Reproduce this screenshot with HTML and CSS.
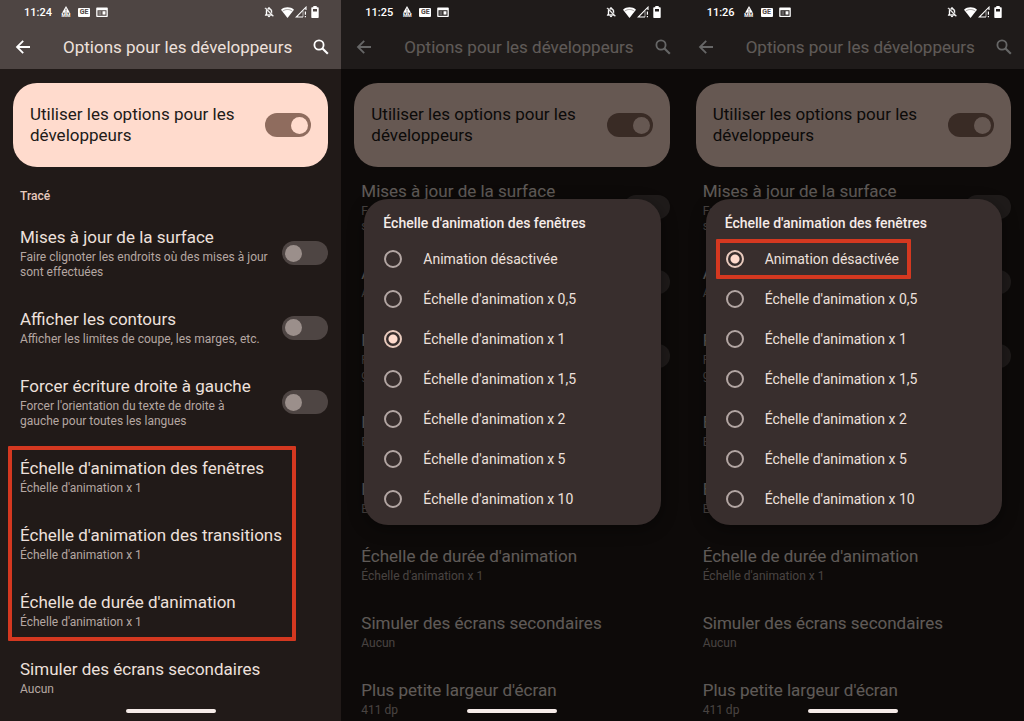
FILE: index.html
```html
<!DOCTYPE html>
<html lang="fr">
<head>
<meta charset="utf-8">
<meta name="viewport" content="width=device-width, initial-scale=1">
<title>Options pour les développeurs</title>
<link rel="stylesheet" href="styles.css">
</head>
<body>
<svg class="sprite" aria-hidden="true">
  <symbol id="i-peak" viewBox="0 0 12 8"><path d="M6 0 10.500 7.800h-9Z" fill="currentColor"/><path d="M6 3v2.200M6 6v1" stroke="#4e4543" stroke-width="1"/></symbol>
  <symbol id="i-card" viewBox="0 0 12 12"><path fill="currentColor" fill-rule="evenodd" d="M1 1.500h10a.8.8 0 0 1 .8.8v8a.8.8 0 0 1-.8.800H1a.8.8 0 0 1-.8-.8v-8a.8.8 0 0 1 .8-.8ZM1.500 4.200v5.600h9V4.200Z"/><path fill="currentColor" d="M6.500 5.200h3v3.400h-3Z"/><path fill="currentColor" d="M2.400 5.600h3v1h-3ZM2.400 7.600h3v1h-3Z" opacity=".6"/></symbol>
  <symbol id="i-bell" viewBox="0 0 24 24"><path fill="currentColor" stroke="currentColor" stroke-width=".8" d="M20 18.690 7.840 6.140 5.270 3.490 4 4.760l2.800 2.800v.010c-.520.990-.800 2.160-.800 3.420v5l-2 2v1h13.730l2 2L21 19.720l-1-1.030ZM12 22c1.110 0 2-.890 2-2h-4c0 1.110.890 2 2 2Zm6-7.320V11c0-3.080-1.640-5.640-4.500-6.320V4c0-.830-.670-1.500-1.500-1.500s-1.500.670-1.500 1.500v.680c-.510.120-.990.310-1.430.550L10.600 6.800c.440-.190.900-.300 1.400-.300 2.490 0 4 2.020 4 4.500v1.100l2 2.580ZM8 17v-6c0-.650.100-1.270.300-1.820L15.900 17H8Z"/></symbol>
  <symbol id="i-wifi" viewBox="0 0 24 20"><path fill="currentColor" d="M12 20 0 5C3.500 2 7.500.500 12 .500S20.500 2 24 5Z"/><path d="M3 7.500C6 5.200 9 4.500 12 4.500s6 .7 9 3" fill="none" stroke="#4e4543" stroke-width="1.300" opacity=".7"/></symbol>
  <symbol id="i-signal" viewBox="0 0 12 12"><path d="M8 11H1.200L11 1.200V4" fill="none" stroke="currentColor" stroke-width="1.100"/><path d="M8 11V5" stroke="currentColor" stroke-width=".6"/><path d="M10.400 5.500v3.300M10.400 10v1.300" stroke="currentColor" stroke-width="1.200"/></symbol>
  <symbol id="i-battery" viewBox="0 0 8 12"><path fill="currentColor" fill-rule="evenodd" d="M2.300 0h3.400v1.300H7a.7.7 0 0 1 .7.700v9.300a.7.7 0 0 1-.7.700H1a.7.7 0 0 1-.7-.7V2a.7.7 0 0 1 .7-.7h1.300ZM2 3v2.500h4V3Z"/></symbol>
  <symbol id="i-back" viewBox="0 0 16 16"><path d="M15 8H2M8.200 1.800 2 8l6.200 6.200" fill="none" stroke="currentColor" stroke-width="1.800"/></symbol>
  <symbol id="i-search" viewBox="0 0 16 16"><circle cx="6" cy="6" r="4.600" fill="none" stroke="currentColor" stroke-width="1.800"/><path d="m9.500 9.500 5.300 5.300" stroke="currentColor" stroke-width="2.100"/></symbol>
</svg>

<main class="screens">
  <section class="phone">
    <header class="top">
      <div class="status">
        <time>11:24</time>
        <span class="ic peak"><svg><use href="#i-peak"/></svg><b>MM</b></span><b class="ic news">GE</b><svg class="ic"><use href="#i-card"/></svg>
        <span class="spacer"></span>
        <svg class="ic"><use href="#i-bell"/></svg><svg class="ic wifi"><use href="#i-wifi"/></svg><svg class="ic signal"><use href="#i-signal"/></svg><svg class="ic battery"><use href="#i-battery"/></svg>
      </div>
      <div class="appbar">
        <button class="iconbtn" aria-label="Retour"><svg><use href="#i-back"/></svg></button>
        <h1>Options pour les développeurs</h1>
        <button class="iconbtn" aria-label="Rechercher"><svg><use href="#i-search"/></svg></button>
      </div>
    </header>
    <label class="master"><span>Utiliser les options pour les développeurs</span><input class="switch" type="checkbox" role="switch" checked></label>
    <h2 class="section">Tracé</h2>
    <div class="list">
      <label class="item"><span class="txt"><span class="name">Mises à jour de la surface</span><span class="sub">Faire clignoter les endroits où des mises à jour sont effectuées</span></span><input class="switch" type="checkbox" role="switch"></label>
      <label class="item"><span class="txt"><span class="name">Afficher les contours</span><span class="sub">Afficher les limites de coupe, les marges, etc.</span></span><input class="switch" type="checkbox" role="switch"></label>
      <label class="item"><span class="txt"><span class="name">Forcer écriture droite à gauche</span><span class="sub">Forcer l'orientation du texte de droite à<br>gauche pour toutes les langues</span></span><input class="switch" type="checkbox" role="switch"></label>
      <div class="marked">
        <div class="item"><span class="txt"><span class="name">Échelle d'animation des fenêtres</span><span class="sub">Échelle d'animation x 1</span></span></div>
        <div class="item"><span class="txt"><span class="name">Échelle d'animation des transitions</span><span class="sub">Échelle d'animation x 1</span></span></div>
        <div class="item"><span class="txt"><span class="name">Échelle de durée d'animation</span><span class="sub">Échelle d'animation x 1</span></span></div>
      </div>
      <div class="item"><span class="txt"><span class="name">Simuler des écrans secondaires</span><span class="sub">Aucun</span></span></div>
    </div>
    <span class="home"></span>
  </section>

  <section class="phone">
    <header class="top">
      <div class="status">
        <time>11:25</time>
        <span class="ic peak"><svg><use href="#i-peak"/></svg><b>MM</b></span><b class="ic news">GE</b><svg class="ic"><use href="#i-card"/></svg>
        <span class="spacer"></span>
        <svg class="ic"><use href="#i-bell"/></svg><svg class="ic wifi"><use href="#i-wifi"/></svg><svg class="ic signal"><use href="#i-signal"/></svg><svg class="ic battery"><use href="#i-battery"/></svg>
      </div>
      <div class="appbar">
        <button class="iconbtn" aria-label="Retour"><svg><use href="#i-back"/></svg></button>
        <h1>Options pour les développeurs</h1>
        <button class="iconbtn" aria-label="Rechercher"><svg><use href="#i-search"/></svg></button>
      </div>
    </header>
    <label class="master"><span>Utiliser les options pour les développeurs</span><input class="switch" type="checkbox" role="switch" checked></label>
    <div class="list">
      <label class="item"><span class="txt"><span class="name">Mises à jour de la surface</span><span class="sub">Faire clignoter les endroits où des mises à jour sont effectuées</span></span><input class="switch" type="checkbox" role="switch"></label>
      <label class="item"><span class="txt"><span class="name">Afficher les contours</span><span class="sub">Afficher les limites de coupe, les marges, etc.</span></span><input class="switch" type="checkbox" role="switch"></label>
      <label class="item"><span class="txt"><span class="name">Forcer écriture droite à gauche</span><span class="sub">Forcer l'orientation du texte de droite à<br>gauche pour toutes les langues</span></span><input class="switch" type="checkbox" role="switch"></label>
      <div class="item"><span class="txt"><span class="name">Échelle d'animation des fenêtres</span><span class="sub">Échelle d'animation x 1</span></span></div>
      <div class="item"><span class="txt"><span class="name">Échelle d'animation des transitions</span><span class="sub">Échelle d'animation x 1</span></span></div>
      <div class="item"><span class="txt"><span class="name">Échelle de durée d'animation</span><span class="sub">Échelle d'animation x 1</span></span></div>
      <div class="item"><span class="txt"><span class="name">Simuler des écrans secondaires</span><span class="sub">Aucun</span></span></div>
      <div class="item"><span class="txt"><span class="name">Plus petite largeur d'écran</span><span class="sub">411 dp</span></span></div>
    </div>
    <div class="scrim">
      <fieldset class="dialog">
        <legend>Échelle d'animation des fenêtres</legend>
        <label class="option"><input type="radio" name="scale-a"><span>Animation désactivée</span></label>
        <label class="option"><input type="radio" name="scale-a"><span>Échelle d'animation x 0,5</span></label>
        <label class="option"><input type="radio" name="scale-a" checked><span>Échelle d'animation x 1</span></label>
        <label class="option"><input type="radio" name="scale-a"><span>Échelle d'animation x 1,5</span></label>
        <label class="option"><input type="radio" name="scale-a"><span>Échelle d'animation x 2</span></label>
        <label class="option"><input type="radio" name="scale-a"><span>Échelle d'animation x 5</span></label>
        <label class="option"><input type="radio" name="scale-a"><span>Échelle d'animation x 10</span></label>
      </fieldset>
    </div>
    <span class="home"></span>
  </section>

  <section class="phone">
    <header class="top">
      <div class="status">
        <time>11:26</time>
        <span class="ic peak"><svg><use href="#i-peak"/></svg><b>MM</b></span><b class="ic news">GE</b><svg class="ic"><use href="#i-card"/></svg>
        <span class="spacer"></span>
        <svg class="ic"><use href="#i-bell"/></svg><svg class="ic wifi"><use href="#i-wifi"/></svg><svg class="ic signal"><use href="#i-signal"/></svg><svg class="ic battery"><use href="#i-battery"/></svg>
      </div>
      <div class="appbar">
        <button class="iconbtn" aria-label="Retour"><svg><use href="#i-back"/></svg></button>
        <h1>Options pour les développeurs</h1>
        <button class="iconbtn" aria-label="Rechercher"><svg><use href="#i-search"/></svg></button>
      </div>
    </header>
    <label class="master"><span>Utiliser les options pour les développeurs</span><input class="switch" type="checkbox" role="switch" checked></label>
    <div class="list">
      <label class="item"><span class="txt"><span class="name">Mises à jour de la surface</span><span class="sub">Faire clignoter les endroits où des mises à jour sont effectuées</span></span><input class="switch" type="checkbox" role="switch"></label>
      <label class="item"><span class="txt"><span class="name">Afficher les contours</span><span class="sub">Afficher les limites de coupe, les marges, etc.</span></span><input class="switch" type="checkbox" role="switch"></label>
      <label class="item"><span class="txt"><span class="name">Forcer écriture droite à gauche</span><span class="sub">Forcer l'orientation du texte de droite à<br>gauche pour toutes les langues</span></span><input class="switch" type="checkbox" role="switch"></label>
      <div class="item"><span class="txt"><span class="name">Échelle d'animation des fenêtres</span><span class="sub">Échelle d'animation x 1</span></span></div>
      <div class="item"><span class="txt"><span class="name">Échelle d'animation des transitions</span><span class="sub">Échelle d'animation x 1</span></span></div>
      <div class="item"><span class="txt"><span class="name">Échelle de durée d'animation</span><span class="sub">Échelle d'animation x 1</span></span></div>
      <div class="item"><span class="txt"><span class="name">Simuler des écrans secondaires</span><span class="sub">Aucun</span></span></div>
      <div class="item"><span class="txt"><span class="name">Plus petite largeur d'écran</span><span class="sub">411 dp</span></span></div>
    </div>
    <div class="scrim">
      <fieldset class="dialog">
        <legend>Échelle d'animation des fenêtres</legend>
        <label class="option picked"><input type="radio" name="scale-b" checked><span>Animation désactivée</span></label>
        <label class="option"><input type="radio" name="scale-b"><span>Échelle d'animation x 0,5</span></label>
        <label class="option"><input type="radio" name="scale-b"><span>Échelle d'animation x 1</span></label>
        <label class="option"><input type="radio" name="scale-b"><span>Échelle d'animation x 1,5</span></label>
        <label class="option"><input type="radio" name="scale-b"><span>Échelle d'animation x 2</span></label>
        <label class="option"><input type="radio" name="scale-b"><span>Échelle d'animation x 5</span></label>
        <label class="option"><input type="radio" name="scale-b"><span>Échelle d'animation x 10</span></label>
      </fieldset>
    </div>
    <span class="home"></span>
  </section>
</main>
</body>
</html>
```
FILE: styles.css
```css
* { box-sizing: border-box; }

body {
  margin: 0;
  background: #0d0a0a;
  color: #ede0dc;
  font-family: Roboto, "Noto Sans", sans-serif;
  font-size: 17px;
}

.sprite { position: absolute; width: 0; height: 0; }

.screens {
  display: grid;
  grid-template-columns: repeat(3, minmax(0, 1fr));
  height: 100vh;
  overflow: hidden;
}

.phone {
  position: relative;
  overflow: hidden;
  background: #211a18;
}

/* Status bar and app bar */
.top { background: #4e4543; height: 69px; }

.status {
  position: relative;
  z-index: 2;
  display: flex;
  align-items: center;
  height: 24px;
  padding: 0 22px 0 24px;
  color: #fff;
  font-size: 11px;
  font-weight: 500;
}
.status time { width: 36px; }
.ic { width: 12px; height: 12px; margin-right: 6px; }
.peak {
  display: flex;
  flex-direction: column;
  align-items: center;
  font-size: 5px;
  line-height: 5px;
}
.peak svg { width: 12px; height: 8px; }
.news {
  height: 9px;
  border-radius: 1px;
  background: #fff;
  color: #4e4543;
  font-size: 7px;
  line-height: 9px;
  text-align: center;
}
.spacer { flex: 1; }
.wifi { width: 13px; height: 11px; margin-right: 1px; }
.signal { margin-right: 4px; }
.battery { width: 8px; margin-right: 0; }

.appbar {
  display: flex;
  align-items: center;
  height: 45px;
  padding: 0 12px 0 15px;
}
.appbar h1 {
  flex: 1;
  margin: 0 0 0 32px;
  font-size: 17px;
  font-weight: 400;
  white-space: nowrap;
}
.iconbtn {
  display: flex;
  padding: 0;
  border: 0;
  background: none;
  color: #fff;
}
.iconbtn svg { width: 16px; height: 16px; }

/* Main toggle card */
.master {
  display: flex;
  align-items: center;
  gap: 20px;
  height: 84px;
  margin: 14px 13px 0;
  padding: 0 17px;
  border-radius: 24px;
  background: #ffdbcd;
  color: #211a18;
  line-height: 21px;
}
.master span { flex: 1; }

.switch {
  appearance: none;
  flex: none;
  display: flex;
  align-items: center;
  width: 46px;
  height: 24px;
  margin: 0;
  padding: 0 3px;
  border-radius: 12px;
  background: #4e4543;
}
.switch::before {
  content: "";
  width: 17px;
  height: 17px;
  border-radius: 50%;
  background: #9b8f8b;
}
.switch:checked { justify-content: flex-end; background: #8f6c5e; }
.switch:checked::before { background: #ffdbcd; }

/* Preference list */
.section {
  margin: 21px 20px 8px;
  color: #e7c9be;
  font-size: 12px;
  font-weight: 500;
  line-height: 16px;
}
.master + .list { margin-top: -1px; }
.item {
  display: flex;
  align-items: center;
  justify-content: space-between;
  gap: 8px;
  padding: 14px 13px 14px 20px;
}
.txt { display: grid; gap: 2px; }
.name { line-height: 22px; white-space: nowrap; }
.sub { color: #b5a7a2; font-size: 12px; line-height: 15px; }

.marked { position: relative; }
.marked::after,
.picked::after {
  content: "";
  position: absolute;
  inset: 3px 45px 3px 8px;
  border: 4px solid #d43820;
  border-radius: 1px;
}

/* Dialog */
.scrim {
  position: absolute;
  inset: 0;
  z-index: 1;
  display: flex;
  align-items: center;
  padding: 3px 22px 0 23px;
  background: rgba(0, 0, 0, 0.6);
}
.dialog {
  flex: 1;
  min-width: 0;
  margin: 0;
  padding: 15px 0 6px;
  border: 0;
  border-radius: 24px;
  background: #382e2d;
  box-shadow: 0 4px 16px rgba(0, 0, 0, 0.4);
}
.dialog legend {
  float: left;
  width: 100%;
  padding: 0 19px;
  margin-bottom: 7px;
  font-size: 14px;
  font-weight: 500;
  line-height: 18px;
  color: #f5ebe8;
}
.option {
  position: relative;
  clear: both;
  display: flex;
  align-items: center;
  gap: 21px;
  height: 40px;
  padding: 0 20px;
  font-size: 14px;
}
.option input {
  appearance: none;
  width: 18px;
  height: 18px;
  margin: 0;
  border: 2px solid #b3a6a3;
  border-radius: 50%;
}
.option input:checked {
  border-color: #e8cabd;
  background: radial-gradient(circle, #ffdbcd 4px, transparent 5px);
}
.picked::after { inset: 0 91px 0 10px; }

.home {
  position: absolute;
  z-index: 2;
  bottom: 8px;
  left: 50%;
  width: 90px;
  height: 4px;
  border-radius: 2px;
  background: #f5ebe8;
  transform: translateX(-50%);
}
```
